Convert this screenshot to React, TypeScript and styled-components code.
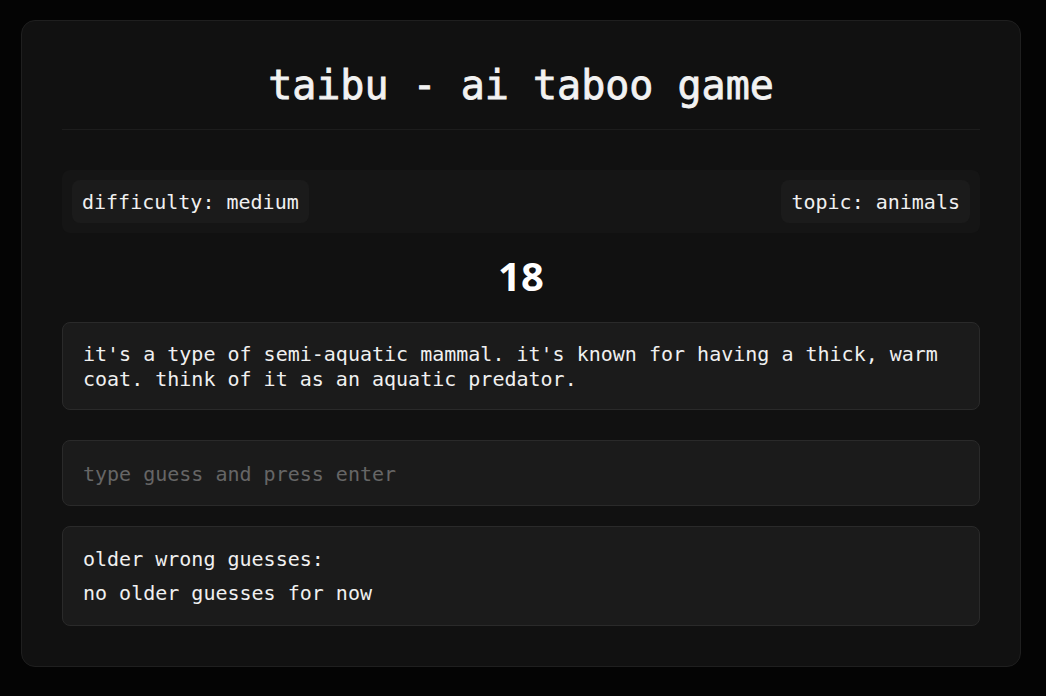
import React from "react";
import styled, { createGlobalStyle } from "styled-components";

const Global = createGlobalStyle`
  html, body {
    margin: 0;
    padding: 0;
    background: #040404;
    color: #f0f0f0;
    font-family: "DejaVu Sans Mono", "Liberation Mono", monospace;
  }
  * { box-sizing: border-box; }
`;

const Page = styled.div`
  padding: 20px 21px;
`;

const Card = styled.main`
  max-width: 1000px;
  background: #111111;
  border: 1px solid #1f1f1f;
  border-radius: 14px;
  padding: 40px;
  display: flex;
  flex-direction: column;
`;

const Title = styled.h1`
  margin: 0;
  font-size: 40px;
  line-height: 49px;
  font-weight: 400;
  -webkit-text-stroke: 0.8px #f2f2f2;
  text-align: center;
  color: #f2f2f2;
  padding-bottom: 19px;
  border-bottom: 1px solid #1d1d1d;
`;

const InfoBar = styled.div`
  margin-top: 40px;
  display: flex;
  justify-content: space-between;
  align-items: center;
  padding: 10px;
  background: #151515;
  border-radius: 8px;
`;

const Pill = styled.span`
  padding: 11px 10px 9px;
  font-size: 20px;
  line-height: 23px;
  background: #1b1b1b;
  border-radius: 8px;
  color: #f0f0f0;
`;

const Timer = styled.div`
  margin: 16px 0 19px;
  font-family: "Noto Sans", "Open Sans", sans-serif;
  font-weight: 700;
  font-size: 40px;
  line-height: 54px;
  text-align: center;
  color: #ffffff;
`;

const Box = styled.div`
  background: #1b1b1b;
  border: 1px solid #2a2a2a;
  border-radius: 8px;
`;

const Hint = styled(Box)`
  padding: 19px 20px 17px;
  font-size: 20px;
  line-height: 25px;
  color: #f0f0f0;
`;

const GuessInput = styled.input`
  margin-top: 30px;
  width: 100%;
  background: #1b1b1b;
  border: 1px solid #2a2a2a;
  border-radius: 8px;
  padding: 21px 20px 19px;
  font-family: "DejaVu Sans Mono", "Liberation Mono", monospace;
  font-size: 20px;
  line-height: 24px;
  height: 66px;
  color: #f0f0f0;
  outline: none;
  &::placeholder {
    color: #666666;
  }
`;

const Older = styled(Box)`
  margin-top: 20px;
  padding: 20px;
  display: flex;
  flex-direction: column;
  gap: 10px;
`;

const Line = styled.p`
  margin: 0;
  font-size: 20px;
  line-height: 24px;
  color: #f0f0f0;
`;

export default function App() {
  return (
    <>
      <Global />
      <Page>
        <Card>
          <Title>taibu - ai taboo game</Title>
          <InfoBar>
            <Pill>difficulty: medium</Pill>
            <Pill>topic: animals</Pill>
          </InfoBar>
          <Timer>18</Timer>
          <Hint>
            it's a type of semi-aquatic mammal. it's known for having a thick, warm coat. think of it as an aquatic predator.
          </Hint>
          <GuessInput placeholder="type guess and press enter" />
          <Older>
            <Line>older wrong guesses:</Line>
            <Line>no older guesses for now</Line>
          </Older>
        </Card>
      </Page>
    </>
  );
}
